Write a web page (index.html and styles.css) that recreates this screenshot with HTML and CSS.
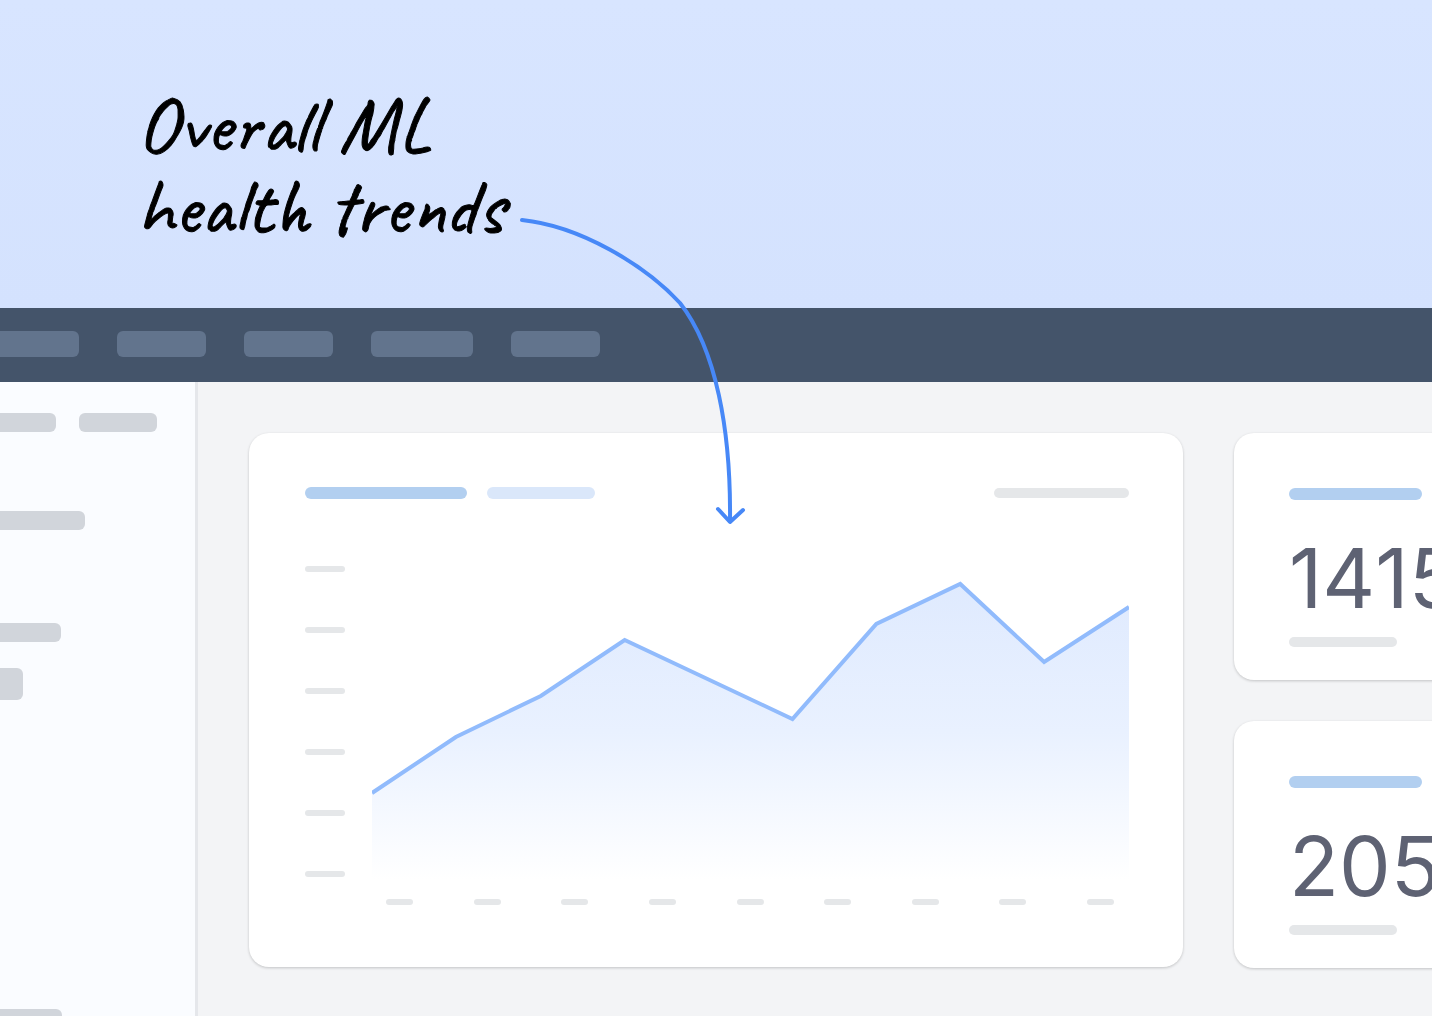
FILE: index.html
```html
<!DOCTYPE html>
<html lang="en">
<head>
  <meta charset="UTF-8" />
  <meta name="viewport" content="width=device-width, initial-scale=1.0"/>
  <title>Overall ML health trends</title>
  <link rel="stylesheet" href="styles.css">
</head>
<body>

<header class="hero">
  <h1 class="note">Overall ML health trends</h1>
</header>

<div class="topbar">
  <span class="tab tab-first"></span>
  <span class="tab"></span>
  <span class="tab"></span>
  <span class="tab tab-wide"></span>
  <span class="tab"></span>
</div>

<div class="workspace">
  <aside class="sidebar">
    <div class="side-row">
      <span class="side-bar side-crumb"></span>
      <span class="side-bar side-action"></span>
    </div>
    <span class="side-bar side-title"></span>
    <span class="side-bar side-label"></span>
    <span class="side-bar side-field"></span>
    <span class="side-bar side-footer"></span>
  </aside>

  <main class="dashboard">
    <section class="card trend">
      <div class="trend-head">
        <span class="bar bar-blue trend-title"></span>
        <span class="bar bar-light trend-subtitle"></span>
        <span class="bar bar-grey trend-range"></span>
      </div>
      <div class="chart">
        <div class="y-axis">
          <span></span><span></span><span></span><span></span><span></span><span></span>
        </div>
        <svg class="plot" viewBox="0 0 758 314" preserveAspectRatio="none" role="img" aria-label="ML health trend">
          <defs>
            <linearGradient id="area" x1="0" y1="0" x2="0" y2="1">
              <stop offset="0" stop-color="#dfeafe"/>
              <stop offset="0.5" stop-color="#e9f1ff"/>
              <stop offset="1" stop-color="#ffffff"/>
            </linearGradient>
          </defs>
          <path fill="url(#area)" d="M0 227 L84 171 L169 130 L253 74 L421 153 L505 58 L589 18 L673 96 L758 41 V314 H0 Z"/>
          <path class="plot-line" d="M0 227 L84 171 L169 130 L253 74 L421 153 L505 58 L589 18 L673 96 L758 41"/>
        </svg>
        <div class="x-axis">
          <span></span><span></span><span></span><span></span><span></span><span></span><span></span><span></span><span></span>
        </div>
      </div>
    </section>

    <div class="metrics">
      <section class="card metric">
        <span class="bar bar-blue metric-title"></span>
        <div class="metric-value">1415</div>
        <span class="bar bar-grey metric-foot"></span>
      </section>
      <section class="card metric">
        <span class="bar bar-blue metric-title"></span>
        <div class="metric-value">205</div>
        <span class="bar bar-grey metric-foot"></span>
      </section>
    </div>
  </main>
</div>

<!-- arrow from the note to the chart -->
<svg class="arrow" width="240" height="320" viewBox="510 210 240 320" aria-hidden="true">
  <path d="M522 220 C580 226 645 265 680 303 C716 349 731 430 730 521"/>
  <path d="M718 509 L730 522 L743 510"/>
</svg>

</body>
</html>
```

FILE: styles.css
```css
* {
  box-sizing: border-box;
}

body {
  margin: 0;
  min-height: 100vh;
  display: flex;
  flex-direction: column;
  position: relative;
  overflow-x: hidden;
  font-family: "Inter", sans-serif;
  background: #f3f4f6;
}

/* Note */
.hero {
  height: 308px;
  padding: 84px 137px 0;
  background: linear-gradient(#d8e5ff, #d4e2fe);
}

.note {
  max-width: 400px;
  margin: 0;
  font-family: "Caveat", cursive;
  font-size: 80px;
  font-weight: 400;
  line-height: 82px;
  color: #000;
  -webkit-text-stroke: 1px #000;
}

.arrow {
  position: absolute;
  top: 210px;
  left: 510px;
  fill: none;
  stroke: #4788f7;
  stroke-width: 4;
  stroke-linecap: round;
  stroke-linejoin: round;
}

/* Top bar */
.topbar {
  display: flex;
  align-items: center;
  gap: 38px;
  height: 74px;
  padding-bottom: 2px;
  background: #44546a;
}

.tab {
  width: 89px;
  height: 26px;
  border-radius: 6px;
  background: #62748d;
}

.tab-first {
  width: 79px;
  border-radius: 0 6px 6px 0;
}

.tab-wide {
  width: 102px;
}

.workspace {
  flex: 1;
  display: flex;
}

/* Sidebar */
.sidebar {
  flex: 0 0 198px;
  display: flex;
  flex-direction: column;
  padding-top: 31px;
  background: #fafcff;
  border-right: 3px solid #e5e7eb;
}

.side-row {
  display: flex;
  gap: 23px;
}

.side-bar {
  height: 19px;
  border-radius: 0 6px 6px 0;
  background: #d1d5db;
}

.side-crumb {
  width: 56px;
}

.side-action {
  width: 78px;
  border-radius: 6px;
}

.side-title {
  width: 85px;
  margin-top: 79px;
}

.side-label {
  width: 61px;
  margin-top: 93px;
}

.side-field {
  width: 23px;
  height: 32px;
  margin-top: 26px;
}

.side-footer {
  width: 62px;
  height: 7px;
  margin-top: auto;
  border-radius: 0 6px 0 0;
}

/* Cards */
.dashboard {
  flex: 1;
  min-width: 0;
  display: flex;
  align-items: flex-start;
  gap: 51px;
  padding: 51px 0 48px 51px;
  overflow: hidden;
}

.card {
  background: #fff;
  border-radius: 20px;
  box-shadow: 0 1px 3px rgba(0, 0, 0, 0.2);
}

.bar {
  display: block;
  height: 12px;
  border-radius: 6px;
}

.bar-blue {
  background: #b2cff0;
}

.bar-light {
  background: #dae7fa;
}

.bar-grey {
  height: 10px;
  background: #e5e7e9;
}

/* Trend chart */
.trend {
  flex: 1;
  min-width: 0;
  padding: 54px 54px 62px 56px;
}

.trend-head {
  display: flex;
  align-items: center;
  gap: 20px;
}

.trend-title {
  width: 162px;
}

.trend-subtitle {
  width: 108px;
}

.trend-range {
  width: 135px;
  margin-left: auto;
}

.chart {
  display: grid;
  grid-template-columns: 40px 1fr;
  column-gap: 27px;
  row-gap: 19px;
  margin-top: 67px;
}

.y-axis {
  display: flex;
  flex-direction: column;
  justify-content: space-between;
  padding-bottom: 3px;
}

.y-axis span,
.x-axis span {
  height: 6px;
  border-radius: 3px;
  background: #e5e7e9;
}

.plot {
  display: block;
  width: 100%;
  height: 314px;
}

.plot-line {
  fill: none;
  stroke: #91bbfc;
  stroke-width: 4;
}

.x-axis {
  grid-column: 2;
  display: flex;
  justify-content: space-between;
  padding: 0 15px 0 14px;
}

.x-axis span {
  width: 27px;
}

/* Metric cards run past the right edge of the window */
.metrics {
  flex: 0 0 198px;
  min-width: 0;
  display: flex;
  flex-direction: column;
  gap: 41px;
}

.metric {
  width: 400px;
  padding: 55px 55px 33px;
}

.metric-title {
  width: 133px;
}

.metric-value {
  margin: 38px 0 17px;
  font-size: 82px;
  font-kerning: none;
  line-height: 82px;
  color: #5e6273;
}

.metric-foot {
  width: 108px;
}
```
